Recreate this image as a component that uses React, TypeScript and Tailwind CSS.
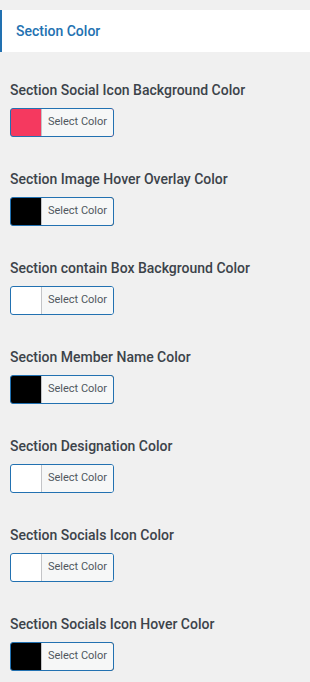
const fields = [
  { label: "Section Social Icon Background Color", color: "#f5395f" },
  { label: "Section Image Hover Overlay Color", color: "#000000" },
  { label: "Section contain Box Background Color", color: "#ffffff" },
  { label: "Section Member Name Color", color: "#000000" },
  { label: "Section Designation Color", color: "#ffffff" },
  { label: "Section Socials Icon Color", color: "#ffffff" },
  { label: "Section Socials Icon Hover Color", color: "#000000" },
];

export default function App() {
  return (
    <div className="min-h-[682px] w-[310px] bg-[#f0f0f0] pt-[10px] font-['Roboto',sans-serif]">
      {/* Panel header */}
      <div className="flex h-[42px] items-center border-l-2 border-[#2271b1] bg-white pl-[14px]">
        <span className="text-[14px] font-medium text-[#2271b1]">Section Color</span>
      </div>

      <div className="flex flex-col gap-[30px] px-[10px] pt-[26px]">
        {fields.map((field) => (
          <div key={field.label} className="flex flex-col gap-[6px]">
            <label className="text-[14px] leading-[24px] font-medium text-[#3c434a]">
              {field.label}
            </label>
            <button
              className="flex h-[29px] w-[104px] overflow-hidden rounded-[3px] border border-[#2271b1] p-0"
              style={{ backgroundColor: field.color }}
            >
              <span className="ml-[30px] flex h-full flex-1 items-center justify-center border-l border-[#c3c4c7] bg-[#f6f7f7] text-[11px] text-[#50575e]">
                Select Color
              </span>
            </button>
          </div>
        ))}
      </div>
    </div>
  );
}
